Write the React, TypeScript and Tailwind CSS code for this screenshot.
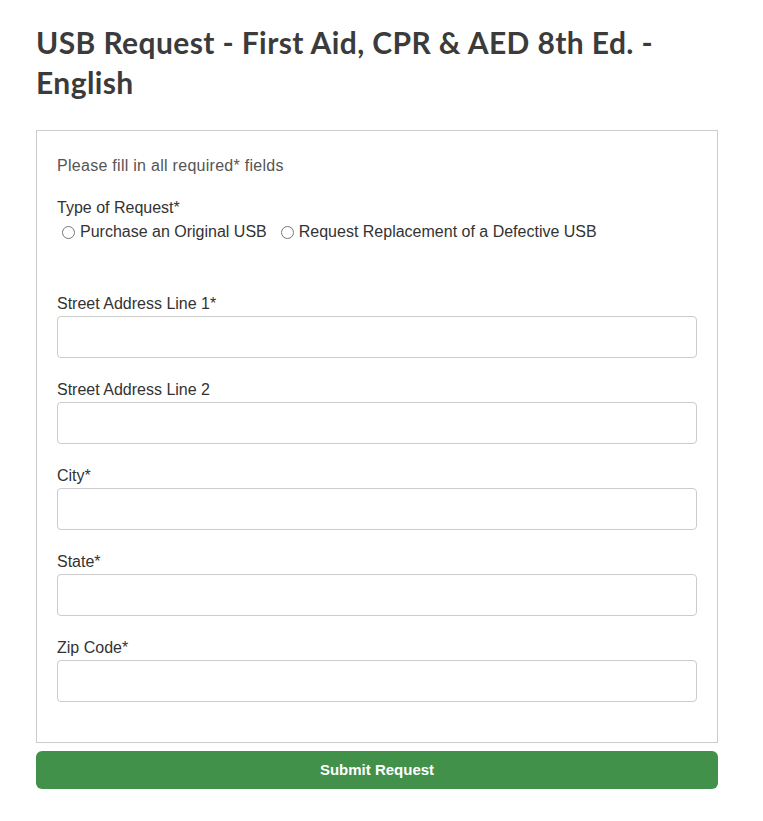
import React from "react";

const fields = [
  { id: "addr1", label: "Street Address Line 1*" },
  { id: "addr2", label: "Street Address Line 2" },
  { id: "city", label: "City*" },
  { id: "state", label: "State*" },
  { id: "zip", label: "Zip Code*" },
];

export default function App() {
  return (
    <div className="min-h-screen bg-white px-9 pt-[22px] font-['Liberation_Sans',Arial,sans-serif]">
      <h1 className="w-[682px] font-['Lato',sans-serif] text-[30px] font-bold leading-[40px] tracking-[0.4px] text-[#3b3b3b]">
        USB Request - First Aid, CPR &amp; AED 8th Ed. - English
      </h1>

      <form className="mt-[28px] w-[682px]" onSubmit={(e) => e.preventDefault()}>
        <div className="border border-[#cccccc] px-5 pt-[25px] pb-10">
          <p className="text-base leading-5 tracking-[0.28px] text-[#555555]">
            Please fill in all required* fields
          </p>

          <div className="mt-[22px]">
            <div className="text-base leading-5 text-[#333333]">Type of Request*</div>
            <div className="mt-[4px] flex items-center text-base leading-5 text-[#333333]">
              <label className="flex items-center">
                <input type="radio" name="type" className="mx-[5px] h-[13px] w-[13px]" />
                Purchase an Original USB
              </label>
              <label className="ml-[9px] flex items-center">
                <input type="radio" name="type" className="mx-[5px] h-[13px] w-[13px]" />
                Request Replacement of a Defective USB
              </label>
            </div>
          </div>

          <div className="mt-[52px] flex flex-col gap-[22px]">
            {fields.map((f) => (
              <div key={f.id}>
                <label htmlFor={f.id} className="block text-base leading-5 text-[#333333]">
                  {f.label}
                </label>
                <input
                  id={f.id}
                  type="text"
                  className="mt-[2px] block h-[42px] w-full rounded-[4px] border border-[#cccccc] bg-white px-3 outline-none"
                />
              </div>
            ))}
          </div>
        </div>

        <button
          type="submit"
          className="mt-2 h-[38px] w-full rounded-[6px] bg-[#41914b] text-[15px] font-bold text-white"
        >
          Submit Request
        </button>
      </form>
    </div>
  );
}
